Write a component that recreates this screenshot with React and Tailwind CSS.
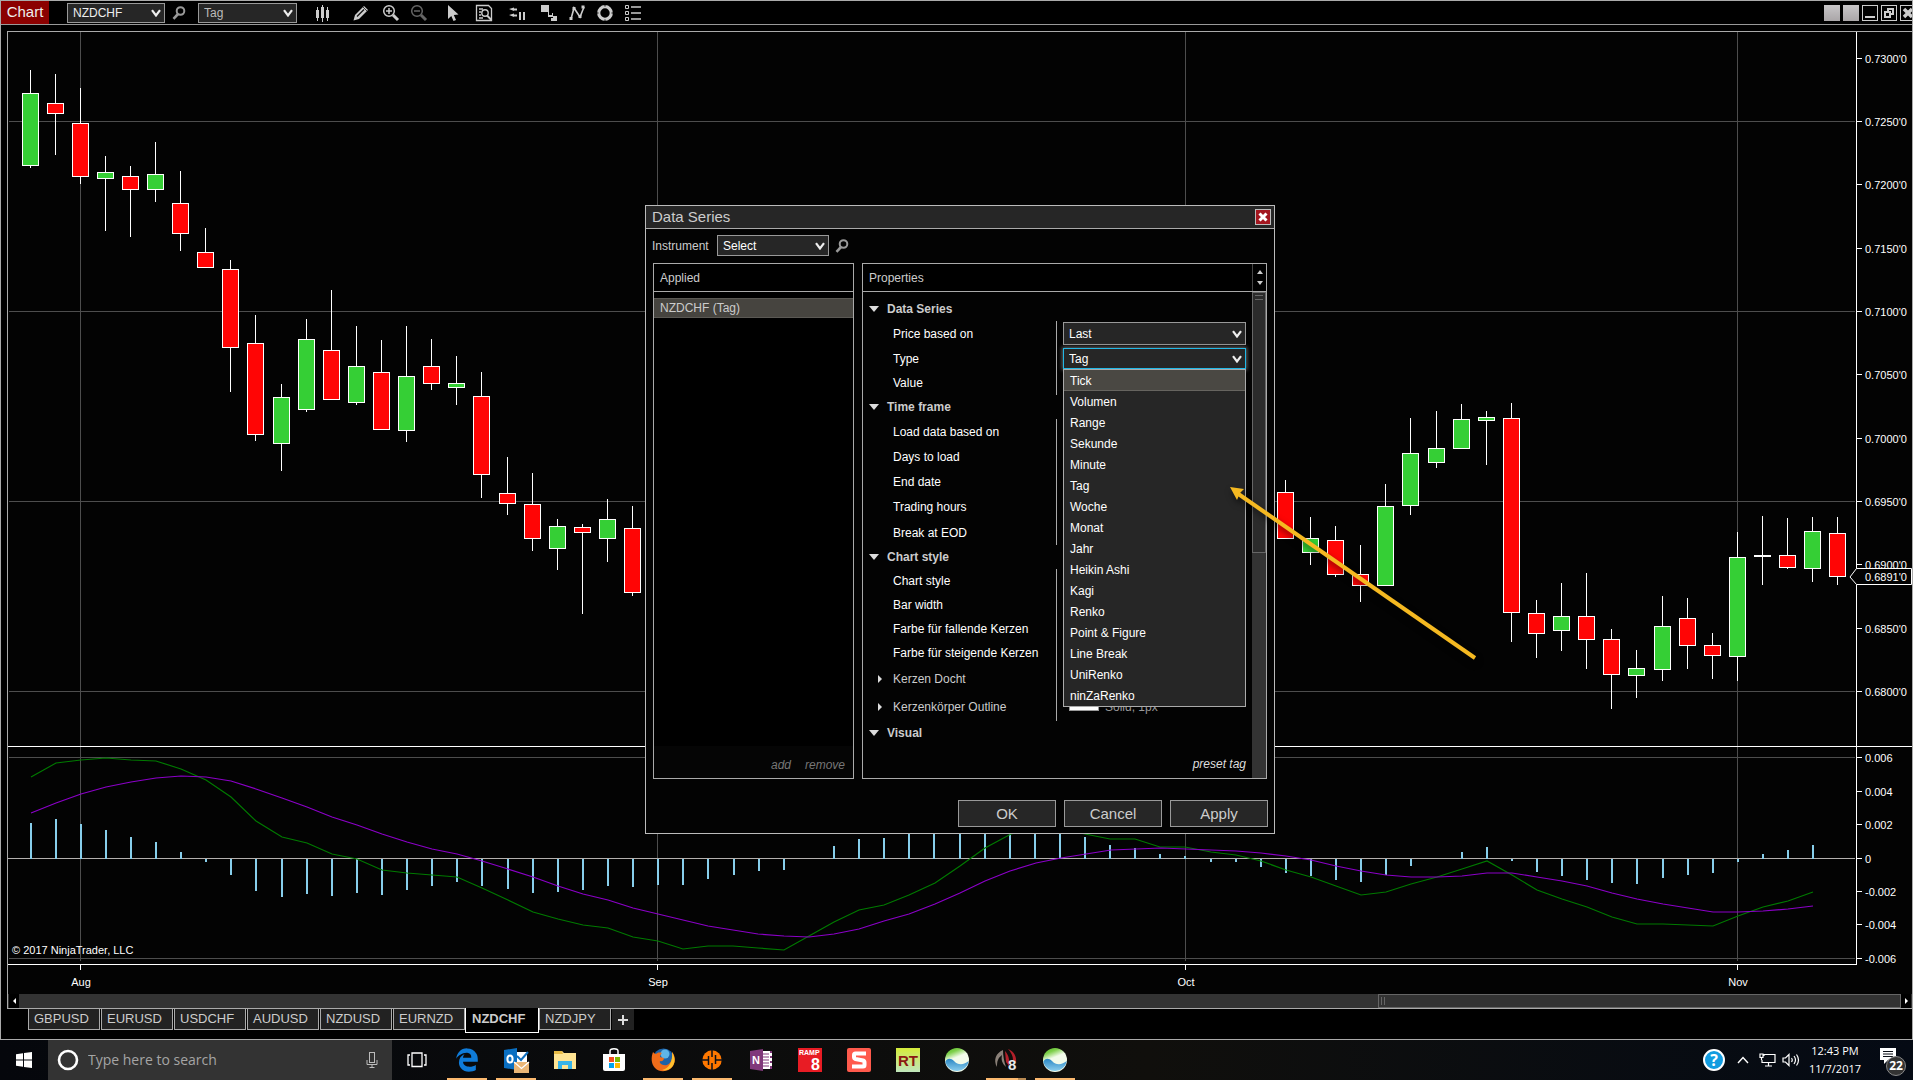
import React from "react";
import { FaEdgeLegacy } from "react-icons/fa";

const UP = "#35cf35";
const DOWN = "#ff0505";
const FLAT = "#ffffff";

/* x, wick top, wick bottom, body top, body bottom, colour */
const CANDLES = [
  [30, 70, 168, 93, 166, UP],
  [55, 74, 155, 103, 114, DOWN],
  [80, 88, 184, 123, 177, DOWN],
  [105, 156, 231, 172, 179, UP],
  [130, 166, 237, 176, 190, DOWN],
  [155, 142, 202, 174, 190, UP],
  [180, 171, 251, 203, 234, DOWN],
  [205, 228, 268, 252, 268, DOWN],
  [230, 260, 392, 269, 348, DOWN],
  [255, 315, 441, 343, 435, DOWN],
  [281, 384, 471, 397, 444, UP],
  [306, 319, 412, 339, 410, UP],
  [331, 290, 400, 350, 400, DOWN],
  [356, 326, 405, 366, 403, UP],
  [381, 340, 430, 372, 430, DOWN],
  [406, 326, 442, 376, 431, UP],
  [431, 339, 390, 366, 384, DOWN],
  [456, 356, 405, 383, 388, UP],
  [481, 372, 498, 396, 475, DOWN],
  [507, 457, 515, 493, 504, DOWN],
  [532, 473, 551, 504, 539, DOWN],
  [557, 519, 570, 526, 549, UP],
  [582, 524, 614, 527, 533, DOWN],
  [607, 499, 562, 519, 539, UP],
  [632, 506, 596, 528, 593, DOWN],
  [1285, 480, 539, 492, 539, DOWN],
  [1310, 517, 565, 538, 553, UP],
  [1335, 526, 577, 540, 575, DOWN],
  [1360, 545, 602, 574, 586, DOWN],
  [1385, 484, 586, 506, 586, UP],
  [1410, 418, 515, 453, 506, UP],
  [1436, 411, 468, 448, 463, UP],
  [1461, 404, 449, 419, 449, UP],
  [1486, 411, 465, 417, 421, UP],
  [1511, 403, 642, 418, 613, DOWN],
  [1536, 600, 658, 613, 634, DOWN],
  [1561, 583, 651, 616, 631, UP],
  [1586, 573, 669, 616, 640, DOWN],
  [1611, 629, 709, 639, 675, DOWN],
  [1636, 650, 698, 668, 676, UP],
  [1662, 596, 681, 626, 670, UP],
  [1687, 598, 669, 618, 646, DOWN],
  [1712, 633, 679, 645, 656, DOWN],
  [1737, 532, 681, 557, 657, UP],
  [1762, 516, 585, 555, 557, FLAT],
  [1787, 518, 569, 555, 568, DOWN],
  [1812, 517, 582, 531, 569, UP],
  [1837, 517, 585, 533, 577, DOWN],
];

/* x, end of the histogram bar */
const HISTOGRAM = [
  [30, 823], [55, 819], [80, 824], [105, 830], [130, 837], [155, 842], [180, 852],
  [205, 862], [230, 875], [255, 891], [281, 897], [306, 894], [331, 896], [356, 893],
  [381, 895], [406, 890], [431, 886], [456, 882], [481, 886], [507, 889], [532, 893],
  [557, 892], [582, 890], [607, 886], [632, 887], [657, 885], [682, 885], [707, 879],
  [733, 875], [758, 871], [783, 870], [833, 846], [858, 839], [883, 838], [908, 832],
  [933, 830], [959, 828], [984, 828], [1009, 829], [1034, 830], [1059, 832], [1084, 837],
  [1109, 845], [1134, 848], [1159, 854], [1184, 856], [1210, 862], [1235, 862],
  [1260, 867], [1285, 873], [1310, 876], [1335, 880], [1360, 882], [1385, 875],
  [1410, 866], [1461, 852], [1486, 847], [1511, 861], [1536, 872], [1561, 876],
  [1586, 880], [1611, 883], [1636, 884], [1662, 878], [1687, 875], [1712, 873],
  [1737, 862], [1762, 854], [1787, 850], [1812, 845],
];

const MACD =
  "31,777 56,763 81,760 106,758 131,760 156,761 181,769 206,780 231,797 256,821 282,837 307,843 332,854 357,859 382,870 407,873 432,875 457,877 482,888 508,900 533,912 558,919 583,925 608,928 633,937 658,941 683,949 708,946 733,946 758,948 784,950 809,936 834,922 859,910 884,905 909,895 935,883 960,866 985,848 1011,834 1036,828 1060,828 1085,834 1110,839 1135,839 1160,847 1185,847 1211,852 1236,855 1261,861 1286,870 1311,877 1336,886 1361,895 1386,892 1411,884 1437,877 1462,869 1487,861 1512,875 1537,890 1562,899 1587,907 1612,917 1637,924 1663,924 1688,925 1713,926 1738,916 1763,907 1788,901 1813,892";
const SIGNAL =
  "31,813 56,803 81,794 106,787 131,782 156,778 181,776 206,777 231,781 256,789 282,798 307,807 332,817 357,825 382,834 407,842 432,849 457,854 482,861 508,869 533,877 558,886 583,894 608,900 633,908 658,914 683,920 708,926 733,930 758,934 784,936 809,937 834,934 859,929 884,921 909,914 935,904 960,893 985,881 1010,871 1036,863 1061,858 1086,854 1111,850 1136,849 1161,848 1186,849 1211,850 1236,851 1261,853 1286,856 1311,860 1336,866 1361,871 1386,875 1411,877 1437,877 1462,876 1487,873 1512,873 1537,877 1562,881 1587,886 1612,893 1637,899 1663,904 1688,908 1713,912 1738,912 1763,911 1788,909 1813,906";

const AXIS_LABELS = [
  [58, "0.7300'0"], [121, "0.7250'0"], [184, "0.7200'0"], [248, "0.7150'0"],
  [311, "0.7100'0"], [374, "0.7050'0"], [438, "0.7000'0"], [501, "0.6950'0"],
  [564, "0.6900'0"], [628, "0.6850'0"], [691, "0.6800'0"],
  [757, "0.006"], [791, "0.004"], [824, "0.002"], [858, "0"],
  [891, "-0.002"], [924, "-0.004"], [958, "-0.006"],
];
const MONTHS = [[80, "Aug"], [657, "Sep"], [1185, "Oct"], [1737, "Nov"]];

function PriceChart() {
  return (
    <svg
      viewBox="8 32 1904 962"
      className="block w-full bg-[#030303] font-['Liberation_Sans',Arial,sans-serif] text-[11px]"
      role="img"
      aria-label="NZDCHF daily chart"
    >
      <g fill="#4d4d4d">
        {[121, 311, 501, 691, 757, 958].map((y) => (
          <rect key={y} x="9" y={y} width="1846" height="1" />
        ))}
        {MONTHS.map(([x]) => (
          <rect key={x} x={x} y="32" width="1" height="929" />
        ))}
      </g>
      <rect x="8" y="858" width="1847" height="1" fill="#b4b0ae" />
      <g fill="#87ceeb">
        {HISTOGRAM.map(([x, y]) => (
          <rect key={x} x={x} y={Math.min(y, 859)} width="2" height={Math.abs(y - 859)} />
        ))}
      </g>
      <polyline points={MACD} fill="none" stroke="#007a00" strokeWidth="1.2" />
      <polyline points={SIGNAL} fill="none" stroke="#8b00c8" strokeWidth="1.2" />
      {CANDLES.map(([x, top, bottom, open, close, colour]) => (
        <g key={x}>
          <rect x={x} y={top} width="1" height={bottom - top} fill="#fff" />
          <rect x={x - 7.5} y={open + 0.5} width="16" height={close - open - 1} fill={colour} stroke="#fff" />
        </g>
      ))}
      <g fill="#fff">
        <rect x="8" y="746" width="1904" height="1" />
        <rect x="8" y="964" width="1849" height="1" />
        <rect x="1856" y="32" width="1" height="933" />
        {MONTHS.map(([x, name]) => (
          <React.Fragment key={name}>
            <rect x={x} y="965" width="1" height="5" />
            <text x={x + 1} y="986" textAnchor="middle">{name}</text>
          </React.Fragment>
        ))}
        {AXIS_LABELS.map(([y, label]) => (
          <React.Fragment key={label}>
            <rect x="1857" y={y} width="5" height="1" />
            <text x="1865" y={y + 5}>{label}</text>
          </React.Fragment>
        ))}
        <text x="12" y="954">© 2017 NinjaTrader, LLC</text>
      </g>
      <path d="M1850 577 L1856.500 568.500 H1911.500 V584.500 H1856.500 Z" fill="#030303" stroke="#fff" />
      <text x="1865" y="581" fill="#fff">0.6891'0</text>
    </svg>
  );
}

function Chevron() {
  return (
    <svg viewBox="0 0 10 8" className="pointer-events-none absolute inset-y-0 right-1 my-auto h-2 w-2.5" aria-hidden="true">
      <path d="M1 1.200 L5 6.500 L9 1.200" fill="none" stroke="#eee" strokeWidth="2.200" />
    </svg>
  );
}

function Picker({ label, value, box, field }) {
  return (
    <div className={"relative " + box}>
      <select
        aria-label={label}
        defaultValue={value}
        className={"block h-full w-full appearance-none bg-[#262626] pl-[5px] text-xs outline-none " + field}
      >
        <option>{value}</option>
      </select>
      <Chevron />
    </div>
  );
}

function SearchGlyph() {
  return (
    <svg viewBox="0 0 14 14" className="size-3.5" aria-hidden="true">
      <circle cx="8.500" cy="5" r="3.800" fill="none" stroke="#999" strokeWidth="2" />
      <path d="M6 8 L1.500 12.800" stroke="#999" strokeWidth="2.600" />
    </svg>
  );
}

const C = "#ccc";
const TOOLS = [
  ["Bars", "ml-4", (
    <path d="M4 3h1v3h1v8H5v3H4v-3H3V6h1zM9 1h1v2h1v11h-1v4H9v-4H8V3h1zM14 3h1v3h1v8h-1v3h-1v-3h-1V6h1z" fill={C} />
  )],
  ["Draw", "ml-[21px]", (
    <g>
      <path d="M3 11 L12 2 L16 6 L7 15 L1.500 16.500 Z" fill={C} />
      <path d="M5 12.500 L12 5.500" stroke="#111" strokeWidth="1.300" />
      <path d="M11 3 L15 7" stroke="#111" strokeWidth=".8" />
    </g>
  )],
  ["Zoom in", "ml-3", (
    <g fill="none" stroke={C}>
      <circle cx="7" cy="7" r="5.300" strokeWidth="1.500" />
      <path d="M7 4v6M4 7h6" strokeWidth="1.500" />
      <path d="M11 11 L16 16" strokeWidth="3" />
    </g>
  )],
  ["Zoom out", "ml-2.5", (
    <g fill="none" stroke="#666">
      <circle cx="7" cy="7" r="5.300" strokeWidth="1.500" />
      <path d="M4 7h6" strokeWidth="1.500" />
      <path d="M11 11 L16 16" strokeWidth="3" />
    </g>
  )],
  ["Pointer", "ml-4", <path key="p" d="M4 1 L4 15 L7.300 12 L9.500 17 L12 16 L9.800 11 L14.500 10.500 Z" fill={C} />],
  ["Data box", "ml-[13px]", (
    <g fill="none" stroke={C}>
      <path d="M1.500 1.500h12l3 3v12h-15z" strokeWidth="1.300" />
      <path d="M4 5h4M4 8h2M4 11h2M4 14h4" strokeWidth="1.400" />
      <circle cx="10" cy="9" r="3.200" strokeWidth="1.400" />
      <path d="M12 11.500 L16.500 16" strokeWidth="2" />
    </g>
  )],
  ["Strategy", "ml-[15px]", (
    <path d="M1 5l5-1.500V7zM1 11l5-1.500V13zM6 4.500h3v2H6zM6 10.500h3v2H6zM11 8h2v8h-2zM15 8h2v8h-2z" fill={C} />
  )],
  ["Chart trader", "ml-3.5", (
    <path d="M1 1h8v7H1zM8 8h1v3h3V9h1v4H8zM13 12h4v5h-6v-3h2z" fill={C} />
  )],
  ["Indicators", "ml-2.5", (
    <g stroke={C} fill={C}>
      <path d="M3 15 L6 4 L12 13 L16 3" fill="none" strokeWidth="1.600" />
      <path d="M1.500 13h3v3h-3zM4.500 3h3v3h-3zM10.500 11h3v3h-3zM13.500 1.500h3v3h-3z" stroke="none" />
    </g>
  )],
  ["Properties", "ml-2.5", (
    <g fill="none" stroke={C}>
      <circle cx="9" cy="9" r="6.300" strokeWidth="3.200" />
      <path d="M9 0v2.500M9 15.500v3M0 9h2.500M15.500 9H18" stroke="#000" />
    </g>
  )],
  ["Chart list", "ml-2.5", (
    <g fill="none" stroke={C}>
      <path d="M1.500 1.500h3v3h-3zM1.500 7.500h3v3h-3zM1.500 13.500h3v3h-3z" />
      <path d="M7 3h10M7 9h10M7 15h10" strokeWidth="1.600" />
    </g>
  )],
];

function Toolbar() {
  return (
    <header className="flex h-6 items-center overflow-hidden border-b border-[#999] bg-black">
      <h1 className="flex h-full w-12 items-center justify-center bg-[#8b0000] text-[15px] text-[#eee]">Chart</h1>
      <Picker label="Instrument" value="NZDCHF" box="ml-[18px] h-5 w-[98px]" field="border border-[#999] text-[#eee]" />
      <button aria-label="Search instrument" className="ml-[7px]"><SearchGlyph /></button>
      <Picker label="Interval" value="Tag" box="ml-3 h-5 w-[99px]" field="border border-[#999] text-[#bbb]" />
      {TOOLS.map(([name, gap, art]) => (
        <button key={name} aria-label={name} className={"shrink-0 " + gap}>
          <svg viewBox="0 0 18 18" className="size-[18px]" aria-hidden="true">{art}</svg>
        </button>
      ))}
      <div className="-mr-1 ml-auto flex shrink-0 gap-[3px]">
        <button aria-label="Link instrument" className="size-4 bg-linear-to-b from-[#c8c6c8] to-[#aaa6a8]" />
        <button aria-label="Link interval" className="size-4 bg-linear-to-b from-[#c8c6c8] to-[#aaa6a8]" />
        <button aria-label="Minimise" className="size-4 border border-[#ccc] px-0.5 pt-2">
          <span className="block h-0.5 bg-[#ccc]" />
        </button>
        <button aria-label="Restore" className="size-4 border border-[#ccc] p-px">
          <svg viewBox="0 0 12 12" className="size-3" fill="none" stroke="#ccc" strokeWidth="2" aria-hidden="true">
            <path d="M5 5 V2 H10 V7 H7 M2 5 H7 V10 H2 Z" />
          </svg>
        </button>
        <button aria-label="Close" className="size-4 border border-[#ccc] p-px">
          <svg viewBox="0 0 12 12" className="size-3" stroke="#ccc" strokeWidth="3.500" aria-hidden="true">
            <path d="M2 2 L10 10 M10 2 L2 10" />
          </svg>
        </button>
      </div>
    </header>
  );
}

const ROW = "flex items-center pl-[30px]";

function Heading({ children, size }) {
  return (
    <h3 className={"flex items-center gap-2 pl-1.5 font-bold text-[#ccc] " + size}>
      <svg viewBox="0 0 10 6" className="h-1.5 w-2.5" aria-hidden="true"><path d="M0 0h10L5 6z" fill="#ddd" /></svg>
      {children}
    </h3>
  );
}

function Row({ children, size = "h-6" }) {
  return <div className={ROW + " text-white " + size}>{children}</div>;
}

function SubHeading({ children, size }) {
  return (
    <button className={"flex w-full items-center gap-[11px] pl-[15px] text-[#ccc] " + size}>
      <svg viewBox="0 0 4 8" className="h-2 w-1" aria-hidden="true"><path d="M0 0L4 4L0 8z" fill="#ddd" /></svg>
      {children}
    </button>
  );
}

const TYPES = [
  "Tick", "Volumen", "Range", "Sekunde", "Minute", "Tag", "Woche", "Monat", "Jahr",
  "Heikin Ashi", "Kagi", "Renko", "Point & Figure", "Line Break", "UniRenko", "ninZaRenko",
];

function Group({ labels, children }) {
  return (
    <div className="flex">
      <div className="w-[194px] shrink-0 border-r border-[#aaa]">{labels}</div>
      <div className="flex-1 pl-1.5">{children}</div>
    </div>
  );
}

function Properties() {
  return (
    <section className="flex w-[405px] flex-col border border-[#aaa]">
      <div className="flex h-7 border-b border-[#aaa] bg-black">
        <h2 className="flex flex-1 items-center pl-1.5 text-[#ccc]">Properties</h2>
        <div className="flex w-3.5 flex-col items-center justify-between border-l border-[#444] py-1.5">
          <svg viewBox="0 0 6 4" className="h-1 w-1.5" aria-hidden="true"><path d="M0 4L3 0L6 4z" fill="#ccc" /></svg>
          <svg viewBox="0 0 6 4" className="h-1 w-1.5" aria-hidden="true"><path d="M0 0L3 4L6 0z" fill="#ccc" /></svg>
        </div>
      </div>
      <div className="flex flex-1">
        <div className="flex flex-1 flex-col pt-1">
          <Heading size="h-[25px]">Data Series</Heading>
          <Group
            labels={<>
              <Row size="h-[25px]">Price based on</Row>
              <Row size="h-[25px]">Type</Row>
              <Row>Value</Row>
            </>}
          >
            <Picker label="Price based on" value="Last" box="mt-px h-[23px] w-[183px]" field="border border-[#999] text-white" />
            <div className="relative mt-[3px] w-[183px]">
              <Picker label="Type" value="Tag" box="h-[21px]" field="border border-[#22b8e6] text-white shadow-[0_0_4px_1px_#666]" />
              <ul role="listbox" aria-label="Type" className="absolute top-full left-0 z-10 w-full border border-[#aaa] bg-[#262626] text-white">
                {TYPES.map((type, i) => (
                  <li
                    key={type}
                    role="option"
                    aria-selected={i === 0}
                    className={"flex h-[21px] items-center pl-1.5 " + (i === 0 ? "bg-[#4a4843] shadow-[inset_0_-1px_0_#66645f]" : "")}
                  >
                    {type}
                  </li>
                ))}
              </ul>
            </div>
          </Group>
          <Heading size="h-6">Time frame</Heading>
          <Group
            labels={<>
              <Row size="h-[25px]">Load data based on</Row>
              <Row size="h-[25px]">Days to load</Row>
              <Row size="h-[25px]">End date</Row>
              <Row size="h-[26px]">Trading hours</Row>
              <Row size="h-[25px]">Break at EOD</Row>
            </>}
          />
          <Heading size="h-6">Chart style</Heading>
          <Group
            labels={<>
              <Row>Chart style</Row>
              <Row>Bar width</Row>
              <Row>Farbe für fallende Kerzen</Row>
              <Row>Farbe für steigende Kerzen</Row>
              <SubHeading size="h-[27px]">Kerzen Docht</SubHeading>
              <SubHeading size="h-[29px]">Kerzenkörper Outline</SubHeading>
            </>}
          >
            <div className="flex h-full items-end gap-1.5 pb-1.5 text-[#999]">
              <span className="ml-1.5 mb-1 h-2.5 w-[30px] border border-[#999] bg-white" />
              Solid, 1px
            </div>
          </Group>
          <Heading size="h-6">Visual</Heading>
          <div className="mt-auto pr-1.5 pb-1.5 text-right">
            <button className="text-[#ddd] italic">preset tag</button>
          </div>
        </div>
        <div className="w-3.5 bg-[#333]">
          <div className="h-[261px] border border-[#666] bg-[#2b2b2b] px-0.5 pt-0.5">
            <div className="h-[5px] border-y border-[#666]" />
          </div>
        </div>
      </div>
    </section>
  );
}

function DataSeriesDialog() {
  return (
    <div role="dialog" aria-label="Data Series" className="absolute top-[205px] left-[645px] w-[630px] border border-[#bbb] bg-[#030303] text-xs">
      <div className="flex h-[23px] items-center justify-between border-b border-[#aaa] bg-[#262626] pr-[3px] pl-1.5">
        <span className="text-[15px] text-[#ccc]">Data Series</span>
        <button aria-label="Close" className="size-4 border border-[#bbb] bg-[#a3161f]">
          <svg viewBox="0 0 14 14" className="size-3.5" stroke="#fff" strokeWidth="3" aria-hidden="true">
            <path d="M3.500 3.500 L10.500 10.500 M10.500 3.500 L3.500 10.500" />
          </svg>
        </button>
      </div>
      <div className="mt-1.5 flex items-center pl-1.5">
        <span className="w-[65px] text-[#ccc]">Instrument</span>
        <Picker label="Instrument to add" value="Select" box="h-[21px] w-28" field="border border-[#999] text-white" />
        <button aria-label="Search" className="ml-1.5"><SearchGlyph /></button>
      </div>
      <div className="mt-[7px] flex h-[516px] justify-between px-[7px]">
        <section className="flex w-[201px] flex-col border border-[#aaa] bg-black">
          <h2 className="flex h-7 items-center border-b border-[#aaa] pl-1.5 text-[#ccc]">Applied</h2>
          <ul className="mt-1.5 flex-1">
            <li className="flex h-5 items-center border-y border-[#5b5954] bg-[#46443f] pl-1.5 text-[#ccc]">NZDCHF (Tag)</li>
          </ul>
          <div className="flex h-8 items-center justify-end gap-3.5 bg-[#050505] pt-1.5 pr-2 text-[#777] italic">
            <button>add</button>
            <button>remove</button>
          </div>
        </section>
        <Properties />
      </div>
      <div className="flex justify-end gap-2 pt-[21px] pr-1.5 pb-1.5 text-[15px] text-[#ccc]">
        {["OK", "Cancel", "Apply"].map((name) => (
          <button key={name} className="h-[27px] w-[98px] border border-[#999] bg-[#262626]">{name}</button>
        ))}
      </div>
    </div>
  );
}

function Arrow() {
  return (
    <svg viewBox="0 0 256 186" className="pointer-events-none absolute top-[480px] left-[1225px] z-20 h-[186px] w-64 drop-shadow-[1px_4px_3px_rgba(0,0,0,0.5)]" aria-hidden="true">
      <path d="M12 13 L250 178" stroke="#f5b921" strokeWidth="4" />
      <path d="M5 7 L19 9 L15 13 L12 20 Z" fill="#f5b921" />
    </svg>
  );
}

function SheetTabs() {
  return (
    <nav className="flex h-[30px] items-start gap-px bg-black pl-[27px] text-[13px] text-[#ccc]" role="tablist" aria-label="Charts">
      {["GBPUSD", "EURUSD", "USDCHF", "AUDUSD", "NZDUSD", "EURNZD", "NZDCHF", "NZDJPY"].map((name) =>
        name === "NZDCHF" ? (
          <button key={name} role="tab" aria-selected="true" className="-mx-px -mt-px h-[25px] w-[74px] border border-t-0 border-white bg-black pb-0.5 pl-1.5 text-left font-bold">
            {name}
          </button>
        ) : (
          <button key={name} role="tab" aria-selected="false" className="h-[21px] w-[72px] border border-t-0 border-[#aaa] bg-[#222] pl-[5px] text-left">
            {name}
          </button>
        )
      )}
      <button aria-label="Add tab" className="flex h-[21px] w-[22px] items-center justify-center bg-[#222]">
        <svg viewBox="0 0 10 10" className="size-2.5" stroke="#ddd" strokeWidth="2" aria-hidden="true"><path d="M5 0v10M0 5h10" /></svg>
      </button>
    </nav>
  );
}

function ChartScrollbar() {
  return (
    <div className="flex h-[15px] border-b border-[#aaa] bg-[#333]">
      <button aria-label="Scroll left" className="ml-px flex w-2.5 items-center justify-center bg-black">
        <svg viewBox="0 0 3 6" className="h-1.5 w-[3px]" aria-hidden="true"><path d="M3 0L0 3L3 6z" fill="#fff" /></svg>
      </button>
      <div className="flex-[1363]" />
      <div className="flex-[519] border border-[#666] bg-[#333] px-0.5 py-0.5">
        <div className="h-full w-1 border-x border-[#666]" />
      </div>
      <button aria-label="Scroll right" className="mr-px flex w-2.5 items-center justify-center bg-black">
        <svg viewBox="0 0 3 6" className="h-1.5 w-[3px]" aria-hidden="true"><path d="M0 0L3 3L0 6z" fill="#fff" /></svg>
      </button>
    </div>
  );
}

function Globe({ id }) {
  return (
    <g>
      <defs>
        <linearGradient id={id + "g"} x1="0" y1="0" x2="0.400" y2="1"><stop offset="0" stopColor="#4fb81e" /><stop offset=".25" stopColor="#7fd04c" /><stop offset=".5" stopColor="#f2fbea" /></linearGradient>
        <linearGradient id={id + "b"} x1="0" y1="0" x2="0" y2="1"><stop offset="0" stopColor="#2a86c4" /><stop offset="1" stopColor="#8ccfee" /></linearGradient>
      </defs>
      <circle cx="12" cy="12" r="12" fill={"url(#" + id + "g)"} />
      <path d="M0.300 14 C2 9.500 6 10 9 13 C13 17.500 19 17 23.800 13 A12 12 0 0 1 0.300 14 Z" fill={"url(#" + id + "b)"} />
    </g>
  );
}

const APPS = [
  ["Edge", "one", <FaEdgeLegacy key="e" size={24} color="#0f7bd8" />],
  ["Outlook", "one", (
    <g>
      <path d="M12 4h11v10H12z" fill="#fff" />
      <path d="M13 8l4 4 7-8" fill="none" stroke="#0f6fc0" strokeWidth="2" />
      <path d="M0 2L13 0v22L0 20z" fill="#0a6fc2" />
      <ellipse cx="6" cy="11" rx="2.600" ry="3.600" fill="none" stroke="#fff" strokeWidth="2" />
      <path d="M10 14h15v11H10z" fill="#eab676" />
      <path d="M10 14l7.500 6.500L25 14" fill="none" stroke="#fff" strokeWidth="1.300" />
    </g>
  )],
  ["File Explorer", "", (
    <g>
      <path d="M1 3h8l2 2h12v16H1z" fill="#ffe493" />
      <path d="M1 3h8l1 3H1z" fill="#e8bb44" />
      <path d="M5 13h14v8h-4v-4H9v4H5z" fill="#38b4e8" />
    </g>
  )],
  ["Store", "", (
    <g>
      <path d="M8 7V3c0-3 8-3 8 0v4" fill="none" stroke="#fff" strokeWidth="1.500" />
      <path d="M1 6h22v15q0 2-2 2H3q-2 0-2-2z" fill="#fff" />
      <path d="M7 9h5v5H7z" fill="#f25022" /><path d="M13 9h5v5h-5z" fill="#7fba00" />
      <path d="M7 15h5v5H7z" fill="#00a4ef" /><path d="M13 15h5v5h-5z" fill="#ffb900" />
    </g>
  )],
  ["Firefox", "one", (
    <g>
      <circle cx="12.500" cy="11" r="10.500" fill="#1c62a8" />
      <circle cx="14" cy="6" r="4.500" fill="#5fb6e8" />
      <path d="M2 4 C0 9 0 16 4 20 C9 25 18 24 22 18 C25 13 24 7 21 4 C22 9 21 15 16 17 C11 18 8 15 9 13 C11 14 13 12 13 10 L9 9 C9 7 10 6 11 5 C8 4 6 5 5 6 C4 6 3 5 2 4 Z" fill="#ef6c1a" />
      <path d="M21 4 C24 9 25 14 21 19 C18 22 14 23 11 22 C18 21 22 13 21 4 Z" fill="#ffc02e" />
    </g>
  )],
  ["NinjaTrader", "one", (
    <g>
      <circle cx="12" cy="12" r="9.700" fill="#ff7800" />
      <path d="M12 1v8M12 15v8M1 12h8M15 12h8" stroke="#0b0f18" strokeWidth="1.500" />
      <path d="M8.500 8v9M15.500 7v9" stroke="#0b0f18" strokeWidth="1.500" />
    </g>
  )],
  ["OneNote", "", (
    <g>
      <path d="M13 3h10v18H13z" fill="#fff" />
      <path d="M13 6h7M13 9h7M13 12h7M13 15h7M13 18h7" stroke="#80397b" strokeWidth="1.200" />
      <path d="M21 3h2v18h-2z" fill="#80397b" />
      <path d="M21 5h2v3h-2zM21 10h2v3h-2zM21 15h2v3h-2z" fill="#fff" />
      <path d="M1 3L14 1v22L1 21z" fill="#80397b" />
      <text x="3" y="16" fontSize="11" fontWeight="bold" fill="#fff">N</text>
    </g>
  )],
  ["Ramp 8", "", (
    <g fill="#fff" fontWeight="bold">
      <path d="M0 0h24v24H0z" fill="#e81c24" />
      <text x="1" y="7" fontSize="7">RAMP</text>
      <text x="13" y="22" fontSize="16">8</text>
    </g>
  )],
  ["Snagit", "", (
    <g>
      <rect width="24" height="24" rx="2" fill="#ff5a4c" />
      <path d="M19 5.500H8.500Q7 5.500 7 7v2q0 1.500 1.500 2l7.500 1.500q1.500.500 1.500 2V17q0 1.500-1.500 1.500H5" fill="none" stroke="#fff" strokeWidth="4" />
    </g>
  )],
  ["RT", "", (
    <g>
      <defs><linearGradient id="rt" x1="0" y1="0" x2="0" y2="1"><stop offset="0" stopColor="#d5ec3a" /><stop offset="1" stopColor="#bfe6bd" /></linearGradient></defs>
      <path d="M0 0h24v24H0z" fill="url(#rt)" />
      <text x="2" y="18" fontSize="15" fontWeight="bold" fill="#8b1a12">RT</text>
    </g>
  )],
  ["Browser", "", <Globe key="a" id="ga" />],
  ["Ninja 8", "many", (
    <g>
      <path d="M9 2C2 5-1 12 3 19c0-6 1-9 5-12C7 12 8 15 12 19C10 13 9 8 9 2z" fill="#8a8078" />
      <path d="M14 1c6 2 9 8 8 14l-3-3C19 8 17 4 14 1zM11 3c3 3 5 8 4 15l-3-4z" fill="#b3202a" />
      <text x="14" y="22" fontSize="15" fontWeight="bold" fill="#e8e8e8">8</text>
    </g>
  )],
  ["Browser 2", "one", <Globe key="b" id="gb" />],
];

function Taskbar() {
  return (
    <footer className="flex h-10 items-stretch bg-linear-to-r from-[#05070c] via-[#100f0c] via-60% to-[#050a14] font-['Open_Sans','Noto_Sans',sans-serif] text-white">
      <button aria-label="Start" className="flex w-12 items-center justify-center">
        <svg viewBox="0 0 16 16" className="size-4" fill="#fff" aria-hidden="true">
          <path d="M0 2.200L7 1.200V7.500H0zM8 1L16 0V7.500H8zM0 8.500H7V14.800L0 13.800zM8 8.500H16V16L8 15z" />
        </svg>
      </button>
      <label className="flex w-[344px] items-center bg-[#333] pr-3.5 pl-[9px]">
        <svg viewBox="0 0 22 22" className="size-[22px] shrink-0" aria-hidden="true"><circle cx="11" cy="11" r="9" fill="none" stroke="#fff" strokeWidth="2.600" /></svg>
        <input aria-label="Search" placeholder="Type here to search" className="ml-[9px] min-w-0 flex-1 bg-transparent text-sm outline-none placeholder:text-[#a5a5a5]" />
        <svg viewBox="0 0 12 18" className="h-[18px] w-3" fill="none" stroke="#bbb" aria-hidden="true">
          <rect x="3.500" y="1.500" width="5" height="10" />
          <path d="M1 9v4.500h10V9M6 13.500v3M3.500 16.500h5" />
        </svg>
      </label>
      <button aria-label="Task view" className="flex w-[49px] items-center justify-center">
        <svg viewBox="0 0 20 16" className="h-4 w-5" fill="none" stroke="#fff" strokeWidth="1.300" aria-hidden="true">
          <path d="M5 1h10v13.500H5zM3 3H1v10h2M17 3h2v10h-2" />
        </svg>
      </button>
      <div className="flex pl-px">
        {APPS.map(([name, open, art]) => (
          <button key={name} aria-label={name} className="flex w-[49px] flex-col items-center justify-end">
            <svg viewBox="0 0 24 24" className="mb-1.5 size-6 overflow-visible font-['Liberation_Sans',Arial,sans-serif]" aria-hidden="true">{art}</svg>
            <span className={"h-0.5 w-10 " + (open ? "bg-[#fbb96f]" : "") + (open === "many" ? " border-r-8 border-[#b98a52]" : "")} />
          </button>
        ))}
      </div>
      <div className="ml-auto flex items-center">
        <button aria-label="Help" className="flex size-[22px] items-center justify-center rounded-full border-2 border-white bg-[#129ce0] text-base leading-none font-bold">?</button>
        <svg viewBox="0 0 12 8" className="ml-3 h-2 w-3" fill="none" stroke="#fff" strokeWidth="1.400" aria-hidden="true"><path d="M1 7L6 1.500L11 7" /></svg>
        <svg viewBox="0 0 17 14" className="ml-2.5 h-3.5 w-[17px]" fill="none" stroke="#fff" strokeWidth="1.200" aria-hidden="true">
          <path d="M5 3V1.500h11v8H3V7M9.500 10v3M6 13h7M1 1h3v3.500H1zM2.500 4.500V7" />
        </svg>
        <svg viewBox="0 0 18 14" className="ml-1.5 h-3.5 w-[18px]" fill="none" stroke="#fff" strokeWidth="1.200" aria-hidden="true">
          <path d="M1 5h2.500L7 1.500v11L3.500 9H1zM9.500 5q1.500 2 0 4M12 3q3 4 0 8M14.500 1.500q4 5.500 0 11" />
        </svg>
        <time className="ml-2 w-[54px] text-center text-[11px] leading-[18px]">12:43 PM<br />11/7/2017</time>
        <button aria-label="Notifications" className="relative mr-[7px] ml-4 h-7 w-7">
          <svg viewBox="0 0 16 16" className="absolute top-0.5 left-0.5 size-4" aria-hidden="true">
            <path d="M0 0h16v12H8l-4 4v-4H0z" fill="#fff" /><path d="M3 3.500h10M3 6h10M3 8.500h10" stroke="#0a0e16" />
          </svg>
          <span className="absolute right-0 -bottom-0.5 flex size-5 items-center justify-center rounded-full border border-[#888] bg-[#333] text-xs font-bold">22</span>
        </button>
      </div>
    </footer>
  );
}

export default function App() {
  return (
    <div className="relative overflow-hidden bg-black font-['Liberation_Sans',Arial,sans-serif]">
      <main className="border border-[#aaa] bg-black">
        <Toolbar />
        <section className="mt-1.5 ml-1.5 border-t border-l border-[#aaa]">
          <PriceChart />
          <ChartScrollbar />
        </section>
        <SheetTabs />
      </main>
      <Taskbar />
      <DataSeriesDialog />
      <Arrow />
    </div>
  );
}
